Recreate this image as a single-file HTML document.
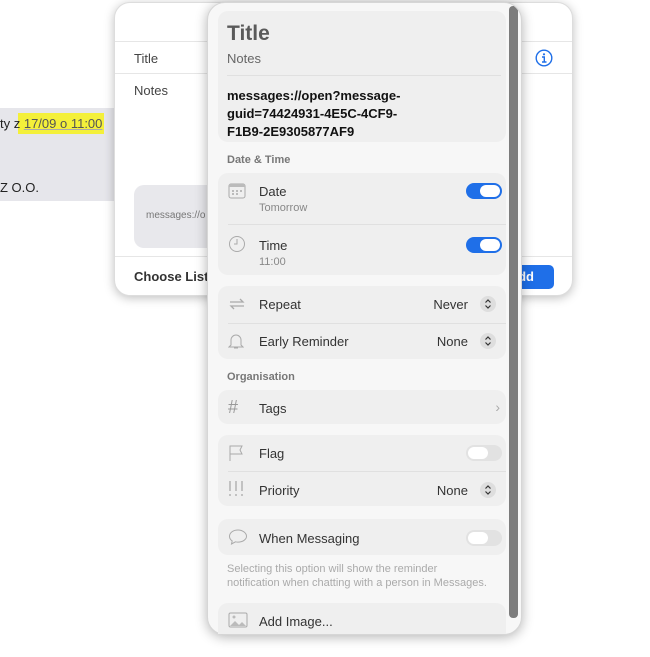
<!DOCTYPE html>
<html><head><meta charset="utf-8"><style>
*{box-sizing:border-box;margin:0;padding:0}
body{width:650px;height:657px;background:#fff;position:relative;overflow:hidden;font-family:"Liberation Sans",sans-serif;color:#222}
.a{position:absolute}
.t{position:absolute;white-space:nowrap}
.card{position:absolute;left:218px;width:288px;background:#efefef;border-radius:10px}
.div{position:absolute;left:10px;right:0;height:1px;background:#e0e0e0}
.lbl{position:absolute;left:41px;font-size:13px;color:#333}
.sub{position:absolute;left:41px;font-size:11px;color:#888}
.val{position:absolute;right:38px;font-size:13px;color:#333}
.step{position:absolute;right:10px;width:16px;height:16px;border-radius:8px;background:#dedede}
.tog{position:absolute;right:4px;width:36px;height:16px;border-radius:8px;background:#1f6fe8}
.tog::after{content:"";position:absolute;right:2px;top:2px;width:20px;height:12px;border-radius:6px;background:#fff}
.off{background:#e2e2e2}.off::after{left:2px;right:auto}
.ic{position:absolute;left:10px;color:#999}
.hdr{position:absolute;left:227px;font-size:11px;font-weight:bold;color:#777}
</style></head><body>
<div class="a" style="left:0;top:108px;width:114px;height:93px;background:#e6e6eb"></div>
<div class="a" style="left:18px;top:113px;width:86px;height:21px;background:#f4f03a"></div>
<div class="t" style="left:0;top:116px;font-size:13px">ty z <span style="color:#555;text-decoration:underline;text-decoration-color:#aaa">17/09 o 11:00</span></div>
<div class="t" style="left:0;top:180px;font-size:13px">Z O.O.</div>

<div class="a" style="left:114px;top:2px;width:459px;height:294px;background:#fff;border-radius:16px;box-shadow:0 2px 10px rgba(0,0,0,.25);border:1px solid #ddd">
 <div class="a" style="left:0;right:0;top:38px;height:1px;background:#e6e6e6"></div>
 <div class="a" style="left:0;right:0;top:70px;height:1px;background:#e6e6e6"></div>
 <div class="a" style="left:0;right:0;top:253px;height:1px;background:#e6e6e6"></div>
 <div class="t" style="left:19px;top:48px;font-size:13px;color:#444">Title</div>
 <div class="t" style="left:19px;top:80px;font-size:13px;color:#444">Notes</div>
 <div class="a" style="left:19px;top:182px;width:100px;height:63px;background:#e8e8ec;border-radius:10px"></div>
 <div class="t" style="left:31px;top:207px;font-size:10px;color:#777">messages://o</div>
 <div class="t" style="left:19px;top:266px;font-size:13px;font-weight:bold;color:#333">Choose List</div>
 <div class="a" style="left:374px;top:262px;width:65px;height:24px;background:#1f6fe8;border-radius:5px;color:#fff;font-size:13px;font-weight:bold;line-height:24px;text-align:right;padding-right:20px">Add</div>
 <svg class="a" style="left:420px;top:46px" width="18" height="18" viewBox="0 0 18 18"><circle cx="9" cy="9" r="7.8" fill="none" stroke="#1f6fe8" stroke-width="1.4"/><circle cx="9" cy="5.3" r="1.1" fill="#1f6fe8"/><path d="M7 8h2.3v5M7 13h4.5" fill="none" stroke="#1f6fe8" stroke-width="1.4"/></svg>
</div>

<div class="a" style="left:207px;top:2px;width:315px;height:633px;background:#f7f7f7;border-radius:18px;box-shadow:0 2px 12px rgba(0,0,0,.3);border:1px solid #d6d6d6;overflow:hidden">
 <div class="a" style="left:301px;top:3px;width:9px;height:612px;background:#7c7c7c;border-radius:4px"></div>
</div>

<div class="card" style="top:11px;height:131px">
 <div class="t" style="left:9px;top:11px;font-size:21px;font-weight:bold;color:#5a5a5a">Title</div>
 <div class="t" style="left:9px;top:40px;font-size:13px;color:#666">Notes</div>
 <div class="div" style="left:9px;right:5px;top:64px"></div>
 <div class="a" style="left:9px;top:76px;font-size:13px;font-weight:bold;color:#111;line-height:18px">messages://open?message-<br>guid=74424931-4E5C-4CF9-<br>F1B9-2E9305877AF9</div>
</div>
<div class="hdr" style="top:154px">Date &amp; Time</div>
<div class="card" style="top:173px;height:102px">
 <svg class="ic" style="top:10px" width="18" height="16" viewBox="0 0 18 16"><rect x="1" y="1" width="16" height="14" rx="2" fill="none" stroke="#aaa"/><rect x="1" y="1" width="16" height="3" fill="#bbb"/><g fill="#bbb"><rect x="4" y="7" width="2" height="2"/><rect x="8" y="7" width="2" height="2"/><rect x="12" y="7" width="2" height="2"/><rect x="4" y="10" width="2" height="2"/><rect x="8" y="10" width="2" height="2"/></g></svg>
 <div class="lbl" style="top:11px">Date</div><div class="sub" style="top:29px">Tomorrow</div>
 <div class="tog" style="top:10px"></div>
 <div class="div" style="top:51px"></div>
 <svg class="ic" style="top:62px" width="18" height="18" viewBox="0 0 18 18"><circle cx="9" cy="9" r="7.5" fill="none" stroke="#aaa"/><path d="M9 4v5H6" fill="none" stroke="#aaa"/></svg>
 <div class="lbl" style="top:65px">Time</div><div class="sub" style="top:83px">11:00</div>
 <div class="tog" style="top:64px"></div>
</div>
<div class="card" style="top:286px;height:73px">
 <svg class="ic" style="top:10px" width="18" height="16" viewBox="0 0 18 16"><path d="M2 6h13l-3-3M16 10H3l3 3" fill="none" stroke="#aaa" stroke-width="1.3"/></svg>
 <div class="lbl" style="top:11px">Repeat</div><div class="val" style="top:11px">Never</div>
 <svg class="step" style="top:10px" viewBox="0 0 16 16"><path d="M5.5 6.5L8 4l2.5 2.5M5.5 9.5L8 12l2.5-2.5" fill="none" stroke="#333" stroke-width="1.2"/></svg>
 <div class="div" style="top:37px"></div>
 <svg class="ic" style="top:46px" width="16" height="18" viewBox="0 0 16 18"><path d="M3 13V8a5 5 0 0 1 10 0v5l2 2H1z M6 16h4" fill="none" stroke="#aaa"/></svg>
 <div class="lbl" style="top:48px">Early Reminder</div><div class="val" style="top:48px">None</div>
 <svg class="step" style="top:47px" viewBox="0 0 16 16"><path d="M5.5 6.5L8 4l2.5 2.5M5.5 9.5L8 12l2.5-2.5" fill="none" stroke="#333" stroke-width="1.2"/></svg>
</div>
<div class="hdr" style="top:371px">Organisation</div>
<div class="card" style="top:390px;height:34px">
 <div class="t ic" style="top:7px;font-size:18px">#</div>
 <div class="lbl" style="top:11px">Tags</div><div class="t" style="right:6px;top:9px;font-size:14px;color:#aaa">›</div>
</div>
<div class="card" style="top:435px;height:71px">
 <svg class="ic" style="top:9px" width="16" height="18" viewBox="0 0 16 18"><path d="M2 17V2h12l-2 4 2 4H2" fill="none" stroke="#aaa"/></svg>
 <div class="lbl" style="top:11px">Flag</div><div class="tog off" style="top:10px"></div>
 <div class="div" style="top:36px"></div>
 <svg class="ic" style="top:45px" width="16" height="18" viewBox="0 0 16 18"><path d="M2 1v10M8 1v10M14 1v10" stroke="#aaa" stroke-width="1.3"/><path d="M2 14v2M8 14v2M14 14v2" stroke="#aaa" stroke-width="1.3"/></svg>
 <div class="lbl" style="top:48px">Priority</div><div class="val" style="top:48px">None</div>
 <svg class="step" style="top:47px" viewBox="0 0 16 16"><path d="M5.5 6.5L8 4l2.5 2.5M5.5 9.5L8 12l2.5-2.5" fill="none" stroke="#333" stroke-width="1.2"/></svg>
</div>
<div class="card" style="top:519px;height:36px">
 <svg class="ic" style="top:9px" width="20" height="18" viewBox="0 0 20 18"><path d="M10 2C5 2 1.5 4.8 1.5 8.3c0 2 1 3.6 2.7 4.6L3.5 16l4-2.2c.8.2 1.6.3 2.5.3 5 0 8.5-2.8 8.5-5.8S15 2 10 2z" fill="none" stroke="#aaa"/></svg>
 <div class="lbl" style="top:12px">When Messaging</div><div class="tog off" style="top:11px"></div>
</div>
<div class="a" style="left:227px;top:562px;font-size:11px;color:#aaa;line-height:14px">Selecting this option will show the reminder<br>notification when chatting with a person in Messages.</div>
<div class="card" style="top:603px;height:31px;border-radius:10px 10px 0 0">
 <svg class="ic" style="top:9px" width="20" height="16" viewBox="0 0 20 16"><rect x="1" y="1" width="18" height="14" rx="1.5" fill="none" stroke="#aaa"/><path d="M2 14l5-5 4 4 3-3 4 4z" fill="#bbb"/><circle cx="6" cy="5" r="1.5" fill="#bbb"/></svg>
 <div class="lbl" style="top:11px">Add Image...</div>
</div>
</body></html>
